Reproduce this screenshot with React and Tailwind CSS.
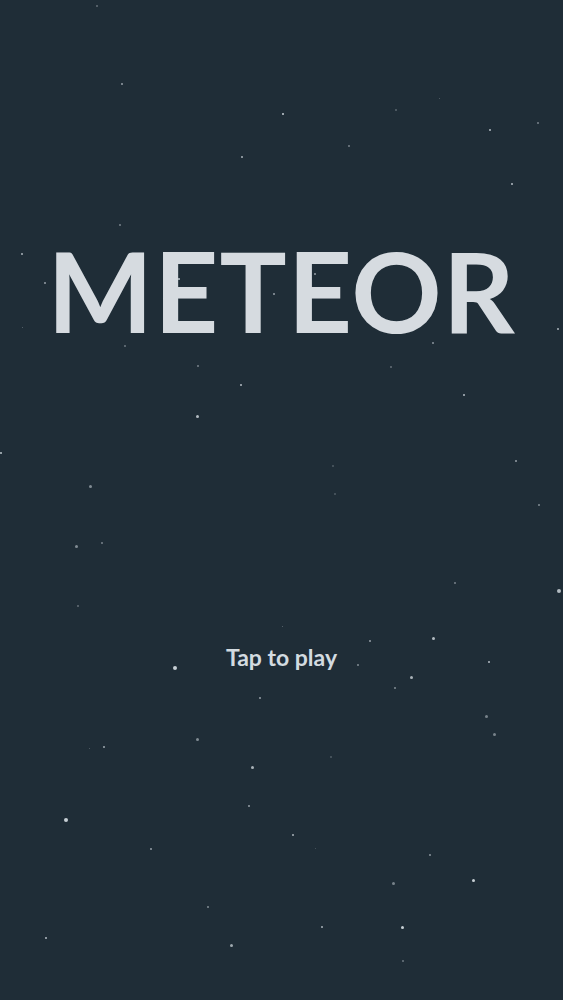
// Meteor title screen
const stars = [
  // [x, y, size, opacity]
  [97, 6, 1.5, 0.35],
  [122, 84, 2.5, 0.6],
  [283, 114, 2.5, 0.85],
  [242, 157, 2.5, 0.7],
  [349, 146, 1.5, 0.45],
  [396, 110, 1.5, 0.3],
  [439, 98, 1, 0.3],
  [490, 130, 2.5, 0.75],
  [538, 123, 1.5, 0.45],
  [512, 184, 2.5, 0.75],
  [120, 225, 2, 0.45],
  [22, 254, 2.5, 0.7],
  [45, 283, 2.5, 0.6],
  [179, 279, 2, 0.8],
  [258, 257, 2, 0.9],
  [274, 294, 2.5, 0.6],
  [315, 274, 1.5, 0.6],
  [433, 343, 2.5, 0.55],
  [558, 329, 2, 0.7],
  [125, 346, 1.5, 0.4],
  [22, 327, 1, 0.35],
  [198, 366, 1.5, 0.45],
  [241, 385, 2, 0.75],
  [391, 367, 2, 0.35],
  [464, 395, 2.5, 0.75],
  [197, 416, 3, 0.75],
  [1, 453, 2.5, 0.8],
  [333, 466, 1.5, 0.25],
  [335, 494, 1.5, 0.25],
  [516, 461, 2.5, 0.6],
  [539, 505, 2, 0.5],
  [90, 486, 3, 0.5],
  [76, 546, 3, 0.5],
  [102, 543, 2, 0.45],
  [455, 583, 2, 0.45],
  [559, 591, 3.5, 0.75],
  [78, 606, 1.5, 0.35],
  [282, 626, 1, 0.35],
  [370, 641, 2, 0.6],
  [433, 638, 3, 0.75],
  [175, 668, 3.5, 0.85],
  [358, 665, 1.5, 0.5],
  [489, 662, 2.5, 0.75],
  [411, 677, 3, 0.7],
  [395, 688, 2.5, 0.5],
  [260, 698, 1.5, 0.6],
  [486, 716, 3, 0.45],
  [494, 734, 3, 0.45],
  [197, 739, 3, 0.5],
  [104, 747, 2.5, 0.65],
  [89, 748, 1, 0.3],
  [252, 767, 3, 0.7],
  [331, 757, 1.5, 0.25],
  [249, 806, 2.5, 0.6],
  [66, 820, 3.5, 0.85],
  [293, 835, 2.5, 0.7],
  [315, 848, 1, 0.25],
  [151, 849, 1.5, 0.6],
  [430, 855, 2, 0.55],
  [393, 883, 3, 0.45],
  [473, 880, 3, 0.85],
  [208, 907, 1.5, 0.5],
  [322, 927, 2.5, 0.7],
  [402, 927, 3, 0.85],
  [46, 938, 2, 0.75],
  [231, 945, 3, 0.65],
  [403, 961, 2.5, 0.4],
];

export default function App() {
  return (
    <div className="relative w-full h-[1000px] overflow-hidden bg-[#1f2d37] font-['Lato','Noto_Sans',sans-serif]">
      {/* Stars */}
      {stars.map(([x, y, s, o], i) => (
        <span
          key={i}
          className="absolute rounded-full bg-[#e4ebf0]"
          style={{ left: x - s / 2, top: y - s / 2, width: s, height: s, opacity: o }}
        />
      ))}

      {/* Title & prompt */}
      <div className="relative flex flex-col items-center pt-[234px]">
        <h1 className="text-[112px] leading-none font-bold text-[#d6dbe0] tracking-[1px]">
          METEOR
        </h1>
        <p className="mt-[300px] text-[23px] leading-none font-bold text-[#d3dbe0]">
          Tap to play
        </p>
      </div>
    </div>
  );
}
